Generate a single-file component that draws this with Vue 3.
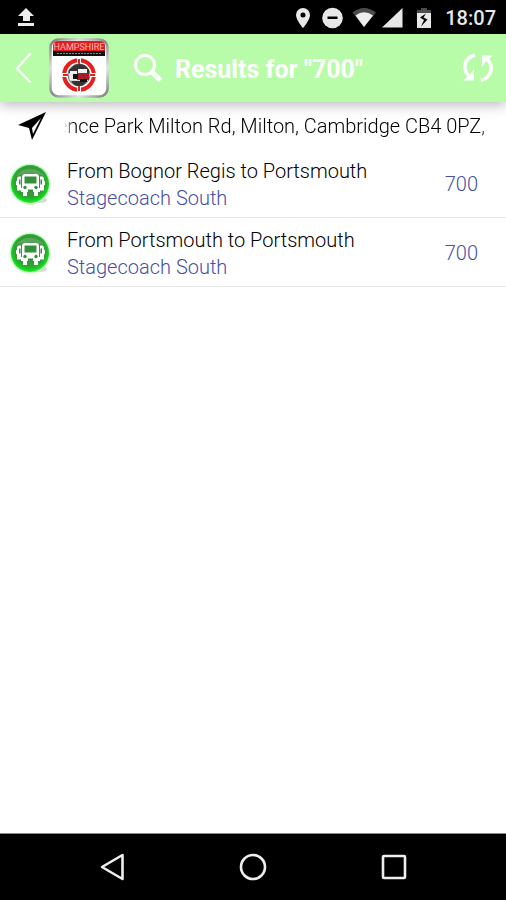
<script setup>
const query = '700'
const location = 'ence Park Milton Rd, Milton, Cambridge CB4 0PZ, U'
const results = [
  { id: 1, route: 'From Bognor Regis to Portsmouth', operator: 'Stagecoach South', number: '700' },
  { id: 2, route: 'From Portsmouth to Portsmouth', operator: 'Stagecoach South', number: '700' },
]
</script>

<template>
  <div class="screen">
    <div class="status">
      <svg class="status-icon" viewBox="0 0 30 34" aria-hidden="true">
        <path d="M15 8l8 8h-4v5h-7v-5H7zM7 23h16v3H7z" fill="#eee" />
      </svg>
      <div class="status-right">
        <svg class="status-icon" viewBox="0 0 30 34" aria-hidden="true">
          <path fill-rule="evenodd" d="M15 8a7 7 0 0 0-7 7c0 5 7 13 7 13s7-8 7-13a7 7 0 0 0-7-7zm0 4.500a2.500 2.500 0 1 1 0 5 2.500 2.500 0 0 1 0-5z" fill="#e8e8e8" />
        </svg>
        <svg class="status-icon" viewBox="0 0 30 34" aria-hidden="true">
          <circle cx="14.500" cy="18" r="10.300" fill="#e8e8e8" />
          <path d="M9.500 16.500h10v2.500h-10z" fill="#000" />
        </svg>
        <svg class="status-icon" viewBox="0 0 30 34" aria-hidden="true">
          <path d="M4.500 12.500Q16 3.500 28 12.500L16 27z" fill="#4c4c4c" />
          <path d="M7.500 15.500Q16 9 25 15.500L16 27z" fill="#eee" />
        </svg>
        <svg class="status-icon" viewBox="0 0 30 34" aria-hidden="true">
          <path d="M24.500 8v19.500H4z" fill="#e8e8e8" />
        </svg>
        <svg class="status-icon" viewBox="0 0 30 34" aria-hidden="true">
          <path d="M13 8h6v2h4v3H9v-3h4z" fill="#4c4c4c" />
          <path d="M9 13h14v15H9z" fill="#e8e8e8" />
          <path d="M18 13.500l-6 4 4 2.500-3 6.500 6.500-7-4-2z" fill="#000" />
        </svg>
        <time class="clock">18:07</time>
      </div>
    </div>

    <header class="bar">
      <button class="back" type="button" aria-label="Back">
        <svg width="20" height="34" viewBox="0 0 20 34" aria-hidden="true">
          <path d="M17.500 2.500L4 17.500l13.500 14" fill="none" stroke="#fff" stroke-width="2.400" />
        </svg>
      </button>
      <svg class="logo" viewBox="0 0 60 60" role="img" aria-label="Hampshire">
        <defs>
          <linearGradient id="rim" x1="0" y1="0" x2="1" y2="1">
            <stop offset="0" stop-color="#777" />
            <stop offset=".25" stop-color="#ddd" />
            <stop offset=".5" stop-color="#888" />
            <stop offset=".75" stop-color="#e4e4e4" />
            <stop offset="1" stop-color="#777" />
          </linearGradient>
        </defs>
        <rect x="1.500" y="1.500" width="57" height="57" rx="8" fill="#fff" stroke="url(#rim)" stroke-width="2.600" />
        <path d="M4 14V8q0-5 5-5h42q5 0 5 5v6z" fill="#e31b1f" />
        <path d="M4 13h52v5H4z" fill="#111" />
        <path d="M8 15.500h44" stroke="#888" stroke-width="1" stroke-dasharray="2 1" />
        <text x="30" y="12" text-anchor="middle" class="logo-text">HAMPSHIRE</text>
        <circle cx="30" cy="37" r="14.800" fill="none" stroke="#e5201c" stroke-width="4" />
        <path d="M30 20v6M30 48v6M13 37h6M41 37h6" stroke="#fff" stroke-width="4" />
        <path d="M30 21v5M30 48v5M14 37h5M41 37h5" stroke="#e5201c" stroke-width="2" />
        <circle cx="30" cy="37" r="11" fill="#d9d9d9" stroke="#777" stroke-width="1" />
        <path d="M20 32q5-6 10-6 7 0 10 6v3H20zM22 43h16q-3 5-8 5t-8-5z" fill="#333" />
        <path d="M21 33h7v9h-7z" fill="#eee" />
        <path d="M28 35h12v7H28z" fill="#a51e22" />
        <path d="M29 31h9v4h-9z" fill="#f2f2f2" />
        <path d="M24 36h5v5h-5zM31 41h7v3h-7z" fill="#111" />
      </svg>
      <svg class="search" width="30" height="30" viewBox="0 0 30 30" aria-hidden="true">
        <circle cx="12" cy="12" r="9.500" fill="none" stroke="#fff" stroke-width="3" />
        <path d="M18.500 18.500l9 9" stroke="#fff" stroke-width="5" />
      </svg>
      <h1 class="title">Results for "{{ query }}"</h1>
      <button class="refresh" type="button" aria-label="Refresh">
        <svg width="32" height="32" viewBox="0 0 32 32" aria-hidden="true">
          <path d="M13 3C2 6 0 17 7 24M19 28.500C30 25 32 14 25 7" fill="none" stroke="#fff" stroke-width="3.600" />
          <path d="M12 17v11.500H1l4-3.500 3-2zM20 15V3.500h11l-4 3.500-3 2z" fill="#fff" />
        </svg>
      </button>
    </header>

    <main class="content">
      <div class="location">
        <svg class="arrow" width="30" height="30" viewBox="0 0 30 30" aria-hidden="true">
          <path fill-rule="evenodd" d="M29 1L15 29l-3-12L1 14zM24 7l-9 10 1 6z" fill="#000" />
        </svg>
        <div class="ticker"><span class="ticker-text">{{ location }}</span></div>
      </div>
      <ul class="list">
        <li v-for="item in results" :key="item.id">
          <a class="row" href="#">
            <svg class="bus" viewBox="0 0 44 44" aria-hidden="true">
              <defs>
                <radialGradient :id="'disc' + item.id" cx=".5" cy=".44" r=".56">
                  <stop offset="0" stop-color="#3c9440" />
                  <stop offset=".7" stop-color="#359a38" />
                  <stop offset=".88" stop-color="#12d41c" />
                  <stop offset="1" stop-color="#28ee30" />
                </radialGradient>
              </defs>
              <ellipse cx="32" cy="38" rx="7" ry="3" fill="#d8d8d8" />
              <circle cx="22" cy="22" r="20.500" fill="#c9fac9" />
              <circle cx="22" cy="22" r="19" :fill="`url(#disc${item.id})`" />
              <path d="M8 14a17 17 0 0 1 28 0Q22 9 8 14z" fill="#58a55b" />
              <rect x="14" y="12" width="17" height="18" rx="3" fill="#fff" />
              <path d="M13 14.500h-2q-2 0-2 3v1l-1 1v3l1 1v5h4zM32 14.500h2q2 0 2 3v1l1 1v3l-1 1v5h-4z" fill="#fff" />
              <path d="M13 26h19v4H13zM15 29h4v5h-4zM26 29h4v5h-4z" fill="#fff" />
              <path d="M16.500 14.500h12v7h-12zM11 17.500h1.500v5H11zM32.500 17.500H34v5h-1.500zM20 27.500h5v2.500h-5z" fill="#32923a" />
              <circle cx="17" cy="25.500" r="1.700" fill="#32923a" />
              <circle cx="28" cy="25.500" r="1.700" fill="#32923a" />
            </svg>
            <span class="info">
              <span class="route">{{ item.route }}</span>
              <span class="operator">{{ item.operator }}</span>
            </span>
            <span class="number">{{ item.number }}</span>
          </a>
        </li>
      </ul>
    </main>

    <nav class="nav">
      <button type="button" aria-label="Back">
        <svg width="30" height="30" viewBox="0 0 30 30" aria-hidden="true">
          <path d="M25.500 3v24L5 15z" fill="none" stroke="#eee" stroke-width="2.600" stroke-linejoin="round" />
        </svg>
      </button>
      <button type="button" aria-label="Home">
        <svg width="30" height="30" viewBox="0 0 30 30" aria-hidden="true">
          <circle cx="15" cy="15" r="12" fill="none" stroke="#eee" stroke-width="2.600" />
        </svg>
      </button>
      <button type="button" aria-label="Recent apps">
        <svg width="30" height="30" viewBox="0 0 30 30" aria-hidden="true">
          <rect x="4" y="4" width="22" height="22" rx="1" fill="none" stroke="#eee" stroke-width="2.600" />
        </svg>
      </button>
    </nav>
  </div>
</template>

<style>
body {
  margin: 0;
  background: #fff;
}
</style>

<style scoped>
.screen {
  display: flex;
  flex-direction: column;
  min-height: 100vh;
  font-family: Roboto, "Liberation Sans", sans-serif;
  font-size: 20px;
  font-weight: 350;
  color: #000;
}
svg {
  display: block;
  flex: none;
}
button {
  display: flex;
  padding: 0;
  border: 0;
  background: none;
}
.status {
  display: flex;
  align-items: center;
  justify-content: space-between;
  height: 34px;
  padding: 0 10px 0 11px;
  background: #000;
}
.status-icon {
  width: 30px;
  height: 34px;
}
.status-right {
  display: flex;
  align-items: center;
}
.clock {
  margin-left: 7px;
  padding-top: 2px;
  font-weight: 500;
  line-height: 34px;
  color: #e8e8e8;
}
.bar {
  position: relative;
  display: flex;
  align-items: center;
  height: 68px;
  padding: 0 12px 0 13px;
  background: #b8fca9;
  box-shadow: 0 3px 12px rgba(0, 0, 0, 0.28);
}
.logo {
  width: 60px;
  height: 60px;
  margin-left: 16px;
}
.logo-text {
  font-size: 9px;
  font-weight: 400;
  fill: #ffb8b0;
}
.search {
  margin-left: 24px;
}
.title {
  flex: 1;
  margin: 0 0 0 12px;
  padding-top: 4px;
  font-size: 25px;
  font-weight: 700;
  line-height: 32px;
  color: #fff;
}
.content {
  flex: 1;
}
.location {
  display: flex;
  align-items: center;
  height: 47px;
  padding: 0 15px 0 17px;
}
.ticker {
  flex: 1;
  min-width: 0;
  margin-left: 17px;
  overflow: hidden;
  white-space: nowrap;
  line-height: 28px;
  mask-image: linear-gradient(to right, transparent, #000 10px, #000 calc(100% - 10px), transparent);
}
.ticker-text {
  margin-left: -7px;
}
.list {
  margin: 0;
  padding: 0;
  list-style: none;
}
.row {
  display: flex;
  align-items: center;
  box-sizing: border-box;
  height: 69px;
  padding: 2px 28px 0 8px;
  border-bottom: 1px solid #e6e6e6;
  color: inherit;
  text-decoration: none;
}
.bus {
  width: 44px;
  height: 44px;
}
.info {
  display: flex;
  flex: 1;
  flex-direction: column;
  margin-left: 15px;
  padding-top: 1px;
  line-height: 27px;
}
.operator,
.number {
  color: #4650a4;
}
.nav {
  display: flex;
  align-items: center;
  justify-content: center;
  gap: 111px;
  height: 66px;
  border-top: 1px solid #888;
  background: #000;
}
</style>
